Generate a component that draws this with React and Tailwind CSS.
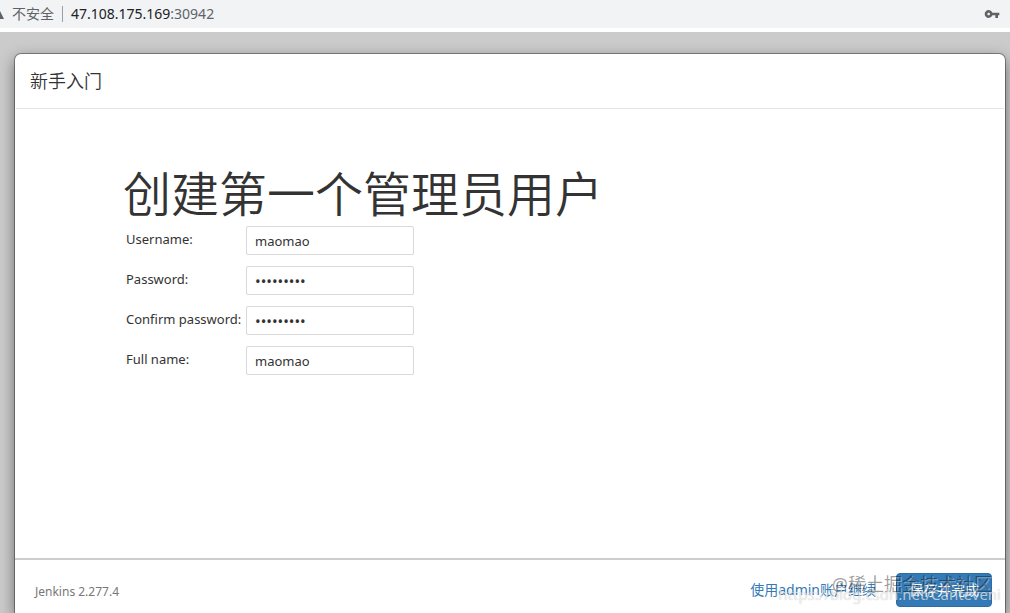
import React, { useState } from 'react';
import { MdVpnKey } from 'react-icons/md';

const FIELDS = [
  { id: 'username', label: 'Username:', type: 'text' },
  { id: 'password1', label: 'Password:', type: 'password' },
  { id: 'password2', label: 'Confirm password:', type: 'password' },
  { id: 'fullname', label: 'Full name:', type: 'text' },
];

function AddressBar() {
  return (
    <div className="flex h-7 shrink-0 items-center bg-[#f1f3f4] pr-[10px] text-sm leading-5 text-[#5f6368]">
      <svg width="4" height="12" viewBox="0 0 4 12" className="mr-2 shrink-0" aria-hidden="true">
        <path d="M0 3 L4 11 H0 Z" fill="#5f6368" />
      </svg>
      <span>不安全</span>
      <span className="mx-2 h-4 w-px bg-[#9aa0a6]" />
      <span>
        <span className="text-[#202124]">47.108.175.169</span>:30942
      </span>
      <MdVpnKey size={16} className="ml-auto" />
    </div>
  );
}

export default function App() {
  const [form, setForm] = useState({
    username: 'maomao',
    password1: 'maomao123',
    password2: 'maomao123',
    fullname: 'maomao',
  });

  const handleChange = (e) => {
    setForm({ ...form, [e.target.name]: e.target.value });
  };

  return (
    <div className="flex h-screen flex-col overflow-hidden bg-white font-['Noto_Sans','Noto_Sans_CJK_SC',sans-serif] text-[#333]">
      <AddressBar />

      <div className="mt-1 flex min-h-0 flex-1 flex-col overflow-hidden bg-[#cbcbcb] pt-[22px] pr-[5px] pl-[15px]">
        <main className="flex min-h-0 flex-1 flex-col rounded-t-md bg-white shadow-[0_0_0_1px_rgba(0,0,0,0.35),0_5px_15px_rgba(0,0,0,0.5)]">
          <header className="mx-px border-b border-[#e5e5e5] px-[14px] py-[14px]">
            <h4 className="text-lg leading-[26px] font-[350]">新手入门</h4>
          </header>

          <form
            id="create-user"
            className="flex-1 px-[108px] pt-[57px]"
            onSubmit={(e) => e.preventDefault()}
          >
            <h1 className="mb-1 text-5xl leading-[56px] font-[350]">创建第一个管理员用户</h1>
            <table className="text-[13px] leading-5">
              <tbody>
                {FIELDS.map((f) => (
                  <tr key={f.id} className="h-10 align-top">
                    <td className="w-[123px] pt-[3px] pl-[3px] whitespace-nowrap">
                      <label htmlFor={f.id}>{f.label}</label>
                    </td>
                    <td>
                      <input
                        id={f.id}
                        name={f.id}
                        type={f.type}
                        value={form[f.id]}
                        onChange={handleChange}
                        className={`block h-[29px] w-[168px] rounded-xs border border-[#d9d9d9] bg-white px-2 outline-none ${
                          f.type === 'password' ? 'text-[15px]' : 'text-[13px]'
                        }`}
                      />
                    </td>
                  </tr>
                ))}
              </tbody>
            </table>
          </form>

          <footer className="relative flex items-center border-t-2 border-[#cdcdcd] pt-[13px] pr-[13px] pb-[6px] pl-5">
            <span className="pt-1 text-xs leading-5 text-[#777]">Jenkins 2.277.4</span>
            <a href="#admin" className="ml-auto text-sm leading-5 text-[#337ab7]">
              使用admin账户继续
            </a>
            <button
              type="submit"
              form="create-user"
              className="ml-5 h-[34px] w-24 rounded border border-[#2e6da4] bg-[#337ab7] text-sm text-white"
            >
              保存并完成
            </button>

            {/* watermarks printed over the footer actions */}
            <span className="pointer-events-none absolute top-3 right-[13px] text-lg leading-6 whitespace-nowrap text-black/40 [text-shadow:1px_1px_0_rgba(255,255,255,0.35)]">
              @稀土掘金技术社区
            </span>
            <span className="pointer-events-none absolute top-[22px] right-1 text-[15px] leading-6 whitespace-nowrap text-white/65 [text-shadow:0_0_1px_rgba(0,0,0,0.25)]">
              https://blog.csdn.net/Canteveni
            </span>
          </footer>
        </main>
      </div>
    </div>
  );
}
